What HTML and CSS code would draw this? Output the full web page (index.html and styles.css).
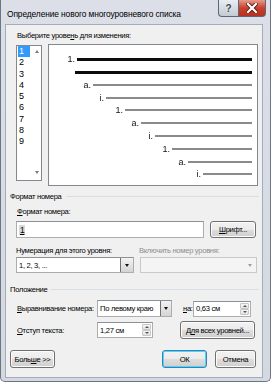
FILE: index.html
```html
<!DOCTYPE html>
<html>
<head>
    <meta charset="UTF-8">
    <title>Определение нового многоуровневого списка</title>
    <link rel="stylesheet" href="styles.css">
</head>
<body>
<div class="window">
    <div class="titlebar">
        <span class="caption">Определение нового многоуровневого списка</span>
        <div class="tbtns">
            <span class="tbtn help">?</span>
            <span class="tbtn close">
                <svg width="12" height="10" viewBox="0 0 12 10">
                    <path d="M2 1 L10 9 M10 1 L2 9" stroke="#5a1a12" stroke-width="4" stroke-linecap="square"/>
                    <path d="M2 1 L10 9 M10 1 L2 9" stroke="#fff" stroke-width="2.2" stroke-linecap="square"/>
                </svg>
            </span>
        </div>
    </div>

    <div class="client">
        <div class="lbl first">Выберите урове<u>н</u>ь для изменения:</div>

        <div class="levels">
            <div class="listbox">
                <ul class="items">
                    <li class="sel">1</li>
                    <li>2</li>
                    <li>3</li>
                    <li>4</li>
                    <li>5</li>
                    <li>6</li>
                    <li>7</li>
                    <li>8</li>
                    <li>9</li>
                </ul>
                <div class="vscroll">
                    <span class="arr up"></span>
                    <span class="arr down"></span>
                </div>
            </div>

            <!-- образец списка -->
            <div class="preview">
                <div class="row r1"><span class="num">1.</span><span class="bar dark"></span></div>
                <div class="row r2"><span class="bar dark"></span></div>
                <div class="row r3"><span class="num">a.</span><span class="bar"></span></div>
                <div class="row r4"><span class="num">i.</span><span class="bar"></span></div>
                <div class="row r5"><span class="num">1.</span><span class="bar"></span></div>
                <div class="row r6"><span class="num">a.</span><span class="bar"></span></div>
                <div class="row r7"><span class="num">i.</span><span class="bar"></span></div>
                <div class="row r8"><span class="num">1.</span><span class="bar"></span></div>
                <div class="row r9"><span class="num">a.</span><span class="bar"></span></div>
                <div class="row r10"><span class="num">i.</span><span class="bar"></span></div>
            </div>
        </div>

        <div class="group g1"><span>Формат номера</span></div>
        <div class="lbl fmt"><u>Ф</u>ормат номера:</div>
        <div class="fmt-row">
            <div class="edit fmt-edit"><span class="field">1</span></div>
            <span class="btn font-btn"><u>Ш</u>рифт...</span>
        </div>

        <div class="two-cols labels">
            <span class="col">Нумерация для этого уровня:</span>
            <span class="col dis">Включить номер уровня:</span>
        </div>
        <div class="two-cols">
            <div class="combo style-combo">
                <span class="val">1, 2, 3, ...</span>
                <span class="drop"><span class="tri"></span></span>
            </div>
            <div class="combo off incl-combo">
                <span class="val"></span>
                <span class="drop"><span class="tri"></span></span>
            </div>
        </div>

        <div class="group g2"><span>Положение</span></div>
        <div class="pos-row p1">
            <span class="plbl"><u>В</u>ыравнивание номера:</span>
            <div class="combo align-combo">
                <span class="val">По левому краю</span>
                <span class="drop"><span class="tri"></span></span>
            </div>
            <span class="at"><u>н</u>а:</span>
            <div class="spin at-spin">
                <span class="val">0,63 см</span>
                <span class="spins"><span class="sp"><span class="tri up"></span></span><span class="sp"><span class="tri"></span></span></span>
            </div>
        </div>
        <div class="pos-row p2">
            <span class="plbl"><u>О</u>тступ текста:</span>
            <div class="spin ind-spin">
                <span class="val">1,27 см</span>
                <span class="spins"><span class="sp"><span class="tri up"></span></span><span class="sp"><span class="tri"></span></span></span>
            </div>
            <span class="btn all-btn">Д<u>л</u>я всех уровней...</span>
        </div>

        <div class="bottom">
            <span class="btn more-btn">Боль<u>ш</u>е &gt;&gt;</span>
            <span class="btn ok-btn">ОК</span>
            <span class="btn cancel-btn">Отмена</span>
        </div>
    </div>
</div>
</body>
</html>
```

FILE: styles.css
```css
html, body, div, span, ul, li {
    margin: 0;
    padding: 0;
}

body {
    width: 273px;
    height: 386px;
    background: #fff;
    font-family: "Liberation Sans", Arial, sans-serif;
    font-size: 7.6px;
    letter-spacing: -0.3px;
    color: #000;
    overflow: hidden;
}

ul, li {
    list-style: none;
}

u {
    text-decoration: underline;
}

.window {
    box-sizing: border-box;
    width: 271px;
    height: 382px;
    border: 1px solid #6d7581;
    border-top: 0;
    border-radius: 0 0 5px 5px;
    background: linear-gradient(#dcdfe8, #d3d8e1);
    display: flex;
    flex-direction: column;
}

/* заголовок окна */
.titlebar {
    height: 24px;
    display: flex;
    align-items: flex-start;
    justify-content: space-between;
}

.caption {
    margin: 9px 0 0 6px;
    font-size: 8.4px;
    letter-spacing: -0.1px;
    color: #000;
}

.tbtns {
    display: flex;
    margin-right: 4px;
}

.tbtn {
    box-sizing: border-box;
    height: 17px;
    border: 1px solid #5d6673;
    border-top: 0;
    display: flex;
    align-items: center;
    justify-content: center;
}

.help {
    width: 20px;
    border-right: 0;
    border-radius: 0 0 0 4px;
    background: linear-gradient(#e9edf3, #c3cad4);
    font-size: 10px;
    font-weight: bold;
    color: #3b4350;
    text-shadow: 0 0 2px #fff;
}

.close {
    width: 28px;
    border-radius: 0 0 4px 0;
    background: linear-gradient(#e49b8c, #c8402d 50%, #b8311f);
}

/* клиентская часть */
.client {
    flex: 1;
    margin: 0 7px 3px 4px;
    border: 1px solid #a3acb8;
    background: #f0f0f0;
}

.lbl {
    height: 10px;
    line-height: 10px;
    padding-left: 11px;
}

.lbl.first {
    margin-top: 6px;
}

.levels {
    display: flex;
    align-items: flex-start;
    margin-top: 3px;
    padding-left: 10px;
}

.listbox {
    box-sizing: border-box;
    width: 26px;
    height: 136px;
    margin-top: 1px;
    border: 1px solid #828790;
    background: #fff;
    display: flex;
}

.items {
    width: 15px;
}

.items li {
    height: 11.3px;
    line-height: 11.3px;
    padding-left: 2px;
    font-size: 9px;
    color: #000;
}

.items li.sel {
    margin-left: 1px;
    padding-left: 1px;
    width: 11px;
    background: #3399ff;
    color: #fff;
}

.vscroll {
    flex: 1;
    display: flex;
    flex-direction: column;
    justify-content: space-between;
    align-items: center;
    padding: 4px 0 6px;
}

.arr {
    width: 0;
    height: 0;
    border-left: 2.5px solid transparent;
    border-right: 2.5px solid transparent;
}

.arr.up {
    border-bottom: 3px solid #7a7a7a;
}

.arr.down {
    border-top: 3px solid #7a7a7a;
}

.preview {
    box-sizing: border-box;
    width: 210px;
    height: 142px;
    margin-left: 6px;
    border: 1px solid #828790;
    background: #fff;
    padding: 8px 5px 0 0;
}

.row {
    height: 12.78px;
    display: flex;
    align-items: center;
}

.num {
    width: 8px;
    margin-right: 2px;
    text-align: right;
    font-size: 9px;
    letter-spacing: 0;
    color: #111;
    will-change: transform;
}

.bar {
    flex: 1;
    height: 2px;
    background: #8a8a8a;
}

.bar.dark {
    height: 3px;
    background: #0c0c0c;
}

.r1 { padding-left: 18px; }
.r2 { padding-left: 26px; }
.r3 { padding-left: 34px; }
.r4 { padding-left: 47px; }
.r5 { padding-left: 66px; }
.r6 { padding-left: 82px; }
.r7 { padding-left: 96px; }
.r8 { padding-left: 113px; }
.r9 { padding-left: 129px; }
.r10 { padding-left: 144px; }

/* рамки групп */
.group {
    height: 10px;
    display: flex;
    align-items: center;
    padding: 0 3px 0 4px;
}

.group::after {
    content: "";
    flex: 1;
    height: 1px;
    margin-left: 4px;
    background: #d5dfe5;
}

.g1 {
    margin-top: 5px;
}

.g2 {
    margin-top: 11px;
}

.lbl.fmt {
    margin-top: 6px;
}

.fmt-row {
    display: flex;
    margin-top: 4px;
    padding-left: 10px;
}

.edit {
    box-sizing: border-box;
    height: 17px;
    border: 1px solid #abadb3;
    border-top-color: #8e9097;
    background: #fff;
    display: flex;
    align-items: center;
}

.fmt-edit {
    width: 188px;
    padding-left: 2px;
}

.field {
    background: #d8d8d8;
    padding: 0 1px;
    font-size: 8.5px;
    text-decoration: underline;
}

.btn {
    box-sizing: border-box;
    height: 18px;
    border: 1px solid #707070;
    border-radius: 3px;
    background: linear-gradient(#f2f2f2, #ebebeb 50%, #dddddd 51%, #cfcfcf);
    box-shadow: inset 0 0 0 1px #fcfcfc;
    display: flex;
    align-items: center;
    justify-content: center;
    color: #000;
    white-space: nowrap;
}

.font-btn {
    width: 46px;
    height: 17px;
    margin-left: 6px;
}

.two-cols {
    display: flex;
    padding-left: 10px;
}

.two-cols.labels {
    margin-top: 8px;
    height: 10px;
    line-height: 10px;
}

.col {
    width: 124px;
}

.col.dis {
    color: #8d8d8d;
}

.combo {
    box-sizing: border-box;
    height: 16px;
    border: 1px solid #abadb3;
    border-top-color: #8e9097;
    background: #fff;
    display: flex;
    align-items: stretch;
    margin-top: 1px;
}

.combo .val {
    flex: 1;
    padding-left: 2px;
    display: flex;
    align-items: center;
    white-space: nowrap;
}

.combo .drop {
    width: 12px;
    border-left: 1px solid #707070;
    background: linear-gradient(#f2f2f2, #d4d4d4);
    display: flex;
    align-items: center;
    justify-content: center;
}

.tri {
    width: 0;
    height: 0;
    border-left: 2.5px solid transparent;
    border-right: 2.5px solid transparent;
    border-top: 3px solid #111;
}

.tri.up {
    border-top: 0;
    border-bottom: 3px solid #555;
}

.style-combo {
    width: 118px;
    margin-right: 6px;
}

.incl-combo {
    width: 117px;
}

.combo.off {
    border-color: #c9c9c9;
    background: #f4f4f4;
}

.combo.off .drop {
    border-left: 0;
    background: transparent;
}

.combo.off .tri {
    border-top-color: #a0a0a0;
}

/* положение */
.pos-row {
    display: flex;
    align-items: center;
    padding-left: 11px;
    white-space: nowrap;
}

.p1 {
    margin-top: 6px;
    height: 17px;
}

.p2 {
    margin-top: 4px;
    height: 18px;
}

.plbl {
    width: 80px;
}

.align-combo {
    width: 75px;
    height: 17px;
    margin-top: 0;
}

.align-combo .drop {
    width: 10px;
}

.at {
    margin-left: 11px;
    width: 10px;
}

.spin {
    box-sizing: border-box;
    height: 16px;
    border: 1px solid #abadb3;
    border-top-color: #8e9097;
    background: #fff;
    display: flex;
}

.spin .val {
    flex: 1;
    padding-left: 2px;
    display: flex;
    align-items: center;
}

.spins {
    width: 9px;
    display: flex;
    flex-direction: column;
    padding: 1px 1px 1px 0;
}

.sp {
    flex: 1;
    border: 1px solid #c6c6c6;
    border-radius: 1px;
    background: linear-gradient(#f6f6f6, #e2e2e2);
    display: flex;
    align-items: center;
    justify-content: center;
}

.sp .tri {
    border-left-width: 2px;
    border-right-width: 2px;
    border-top-width: 2px;
    border-top-color: #555;
}

.sp .tri.up {
    border-bottom-width: 2px;
}

.at-spin {
    width: 58px;
}

.ind-spin {
    width: 56px;
}

.all-btn {
    width: 75px;
    margin-left: 27px;
}

.bottom {
    display: flex;
    margin-top: 11px;
    padding-left: 4px;
}

.more-btn {
    width: 45px;
}

.ok-btn {
    width: 45px;
    margin-left: 107px;
    border-color: #3c7fb1;
    box-shadow: inset 0 0 0 1px #48d8fb;
}

.cancel-btn {
    width: 41px;
    margin-left: 8px;
}
```
